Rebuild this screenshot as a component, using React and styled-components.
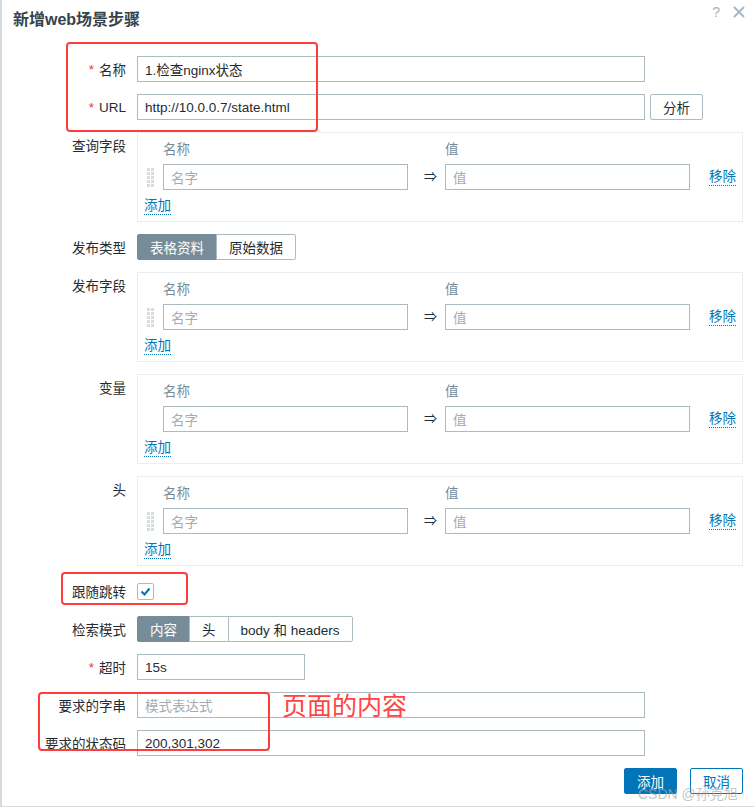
import styled, { createGlobalStyle } from 'styled-components';

const GlobalStyle = createGlobalStyle`
	html, body {
		margin: 0;
		padding: 0;
		background: #ffffff;
	}
	body {
		font-family: "Liberation Sans", Arial, "Noto Sans CJK SC", sans-serif;
		font-size: 13.5px;
		color: #1f2c33;
	}
`;

const Dialog = styled.div`
	position: relative;
	width: 754px;
	height: 807px;
	box-sizing: border-box;
	border-left: 2px solid #d3dbe0;
	border-bottom: 1px solid #d6dde2;
	background: #fff;
	overflow: hidden;
`;

const Header = styled.div`
	height: 40px;
	display: flex;
	align-items: center;
	justify-content: space-between;
	padding: 0 9px 0 11px;
`;

const Title = styled.h1`
	margin: 0;
	font-size: 16px;
	font-weight: 700;
	color: #34434e;
	line-height: 20px;
`;

const HeaderIcons = styled.div`
	display: flex;
	align-items: center;
	gap: 13px;
	margin-top: -16px;
	color: #a8b5be;
	font-size: 14px;
`;

const Form = styled.div`
	margin-top: 16px;
	display: grid;
	grid-template-columns: 124px 606px;
	column-gap: 11px;
	row-gap: 12px;
	align-items: start;
`;

const Label = styled.div`
	height: 26px;
	display: flex;
	align-items: center;
	justify-content: flex-end;
	white-space: nowrap;
`;

const Star = styled.span`
	color: #e33734;
	margin-right: 5px;
`;

const Field = styled.div`
	display: flex;
	align-items: center;
	gap: 5px;
	height: 26px;
`;

const Input = styled.div`
	box-sizing: border-box;
	width: ${(p) => p.$w || 508}px;
	height: 26px;
	border: 1px solid #acbbc2;
	padding: 0 7px;
	display: flex;
	align-items: center;
	white-space: nowrap;
	overflow: hidden;
	color: ${(p) => (p.$placeholder ? '#a3acb2' : '#1f2c33')};
	background: #fff;
`;

const Button = styled.div`
	box-sizing: border-box;
	height: 26px;
	padding: 0 12px;
	display: flex;
	align-items: center;
	justify-content: center;
	border: 1px solid ${(p) => (p.$primary || p.$outline ? '#0275b8' : '#acbbc2')};
	border-radius: 2px;
	background: ${(p) => (p.$primary ? '#0275b8' : '#fff')};
	color: ${(p) => (p.$primary ? '#fff' : p.$outline ? '#0275b8' : '#1f2c33')};
	white-space: nowrap;
`;

const Segments = styled.div`
	display: flex;
	height: 26px;
`;

const Segment = styled.div`
	box-sizing: border-box;
	height: 26px;
	padding: 0 12px;
	display: flex;
	align-items: center;
	border: 1px solid ${(p) => (p.$active ? '#768d99' : '#acbbc2')};
	margin-left: -1px;
	background: ${(p) => (p.$active ? '#768d99' : '#fff')};
	color: ${(p) => (p.$active ? '#fff' : '#1f2c33')};
	white-space: nowrap;
	&:first-child {
		margin-left: 0;
		border-radius: 2px 0 0 2px;
	}
	&:last-child {
		border-radius: 0 2px 2px 0;
	}
`;

const ListBox = styled.div`
	box-sizing: border-box;
	height: 90px;
	border: 1px solid #ebeef0;
	padding: 4px 5px 2px 6px;
	display: grid;
	grid-template-columns: 19px 245px 37px 245px auto;
	grid-template-rows: 22px 26px 24px;
	row-gap: 5px;
	align-items: center;
	overflow: hidden;
`;

const ColHead = styled.div`
	color: #768d99;
	height: 22px;
	display: flex;
	align-items: center;
`;

const Arrow = styled.div`
	text-align: right;
	padding-right: 8px;
	font-size: 13px;
	color: #1f2c33;
	height: 26px;
	line-height: 26px;
`;

const Link = styled.span`
	color: #0275b8;
	border-bottom: 1px dotted #0275b8;
	line-height: 16px;
	justify-self: start;
`;

const RemoveCell = styled.div`
	padding-left: 19px;
	height: 26px;
	display: flex;
	align-items: center;
`;

const AddCell = styled.div`
	grid-column: 1 / -1;
	height: 24px;
	display: flex;
	align-items: center;
	margin-top: -2px;
`;

const Handle = styled.svg`
	display: block;
	margin-left: 3px;
`;

const CheckBox = styled.div`
	box-sizing: border-box;
	width: 17px;
	height: 17px;
	border: 1px solid #acbbc2;
	border-radius: 2px;
	display: flex;
	align-items: center;
	justify-content: center;
`;

const Footer = styled.div`
	display: flex;
	justify-content: flex-end;
	gap: 13px;
	padding-right: 11px;
	margin-top: 12px;
`;

const Mark = styled.div`
	position: absolute;
	box-sizing: border-box;
	border: 2px solid #ff3d3d;
	border-radius: 4px;
	pointer-events: none;
`;

const Note = styled.div`
	position: absolute;
	left: 280px;
	top: 689px;
	font-size: 25px;
	color: #ff4444;
	font-family: "Noto Sans CJK SC", sans-serif;
	line-height: 30px;
`;

const Watermark = styled.div`
	position: absolute;
	left: 636px;
	top: 783px;
	font-size: 14px;
	color: rgba(170, 170, 170, 0.7);
	white-space: nowrap;
	pointer-events: none;
`;

const DragDots = () => (
	<Handle width="7" height="19" viewBox="0 0 7 19">
		{[0, 4, 8, 12, 16].map((y) =>
			[0, 4].map((x) => <rect key={`${x}-${y}`} x={x} y={y} width="3" height="3" fill="#d6dde1" />)
		)}
	</Handle>
);

const PairList = ({ handle }) => (
	<ListBox>
		<span />
		<ColHead>名称</ColHead>
		<span />
		<ColHead>值</ColHead>
		<span />
		<div>{handle && <DragDots />}</div>
		<Input $w={245} $placeholder>名字</Input>
		<Arrow>⇒</Arrow>
		<Input $w={245} $placeholder>值</Input>
		<RemoveCell>
			<Link>移除</Link>
		</RemoveCell>
		<AddCell>
			<Link>添加</Link>
		</AddCell>
	</ListBox>
);

const App = () => {
	return (
		<Dialog>
			<GlobalStyle />
			<Header>
				<Title>新增web场景步骤</Title>
				<HeaderIcons>
					<span>?</span>
					<svg width="12" height="12" viewBox="0 0 12 12">
						<path d="M1 1 L11 11 M11 1 L1 11" stroke="#a8b5be" strokeWidth="1.8" />
					</svg>
				</HeaderIcons>
			</Header>
			<Form>
				<Label>
					<Star>*</Star>名称
				</Label>
				<Field>
					<Input>1.检查nginx状态</Input>
				</Field>

				<Label>
					<Star>*</Star>URL
				</Label>
				<Field>
					<Input>http://10.0.0.7/state.html</Input>
					<Button>分析</Button>
				</Field>

				<Label>查询字段</Label>
				<PairList handle />

				<Label>发布类型</Label>
				<Segments>
					<Segment $active>表格资料</Segment>
					<Segment>原始数据</Segment>
				</Segments>

				<Label>发布字段</Label>
				<PairList handle />

				<Label>变量</Label>
				<PairList />

				<Label>头</Label>
				<PairList handle />

				<Label>跟随跳转</Label>
				<Field>
					<CheckBox>
						<svg width="13" height="13" viewBox="0 0 13 13">
							<path d="M2.5 6.5 L5.5 9.5 L10.5 3.5" fill="none" stroke="#0275b8" strokeWidth="2" />
						</svg>
					</CheckBox>
				</Field>

				<Label>检索模式</Label>
				<Segments>
					<Segment $active>内容</Segment>
					<Segment>头</Segment>
					<Segment>body 和 headers</Segment>
				</Segments>

				<Label>
					<Star>*</Star>超时
				</Label>
				<Field>
					<Input $w={168}>15s</Input>
				</Field>

				<Label>要求的字串</Label>
				<Field>
					<Input $placeholder>模式表达式</Input>
				</Field>

				<Label>要求的状态码</Label>
				<Field>
					<Input>200,301,302</Input>
				</Field>
			</Form>
			<Footer>
				<Button $primary>添加</Button>
				<Button $outline>取消</Button>
			</Footer>

			<Mark style={{ left: 64, top: 42, width: 252, height: 90 }} />
			<Mark style={{ left: 59, top: 572, width: 127, height: 33 }} />
			<Mark style={{ left: 36, top: 692, width: 232, height: 59 }} />
			<Note>页面的内容</Note>
			<Watermark>CSDN @孙克旭</Watermark>
		</Dialog>
	);
};

export default App;
